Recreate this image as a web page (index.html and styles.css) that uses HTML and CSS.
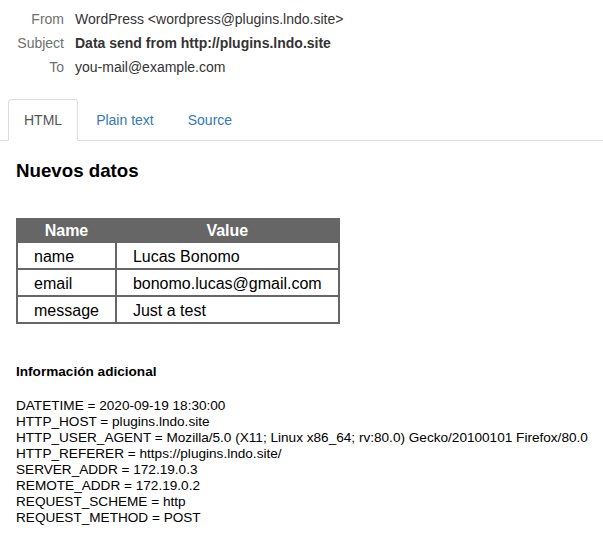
FILE: index.html
```html
<!DOCTYPE html>
<html lang="es">
<head>
<meta charset="utf-8">
<title>Data send from http://plugins.lndo.site</title>
<link rel="stylesheet" href="styles.css">
</head>
<body>
<div class="meta">
  <div class="label">From</div><div class="value">WordPress &lt;wordpress@plugins.lndo.site&gt;</div>
  <div class="label">Subject</div><div class="value subject">Data send from http://plugins.lndo.site</div>
  <div class="label">To</div><div class="value">you-mail@example.com</div>
</div>
<ul class="tabs">
  <li class="tab active"><a>HTML</a></li>
  <li class="tab"><a>Plain text</a></li>
  <li class="tab"><a>Source</a></li>
</ul>
<div class="content">
  <h3 class="title">Nuevos datos</h3>
  <table class="data">
    <thead>
      <tr><th>Name</th><th>Value</th></tr>
    </thead>
    <tbody>
      <tr><td>name</td><td>Lucas Bonomo</td></tr>
      <tr><td>email</td><td>bonomo.lucas@gmail.com</td></tr>
      <tr><td>message</td><td>Just a test</td></tr>
    </tbody>
  </table>
  <div class="info">
    <div class="info-title">Información adicional</div>
    <div class="info-line">DATETIME = 2020-09-19 18:30:00</div>
    <div class="info-line">HTTP_HOST = plugins.lndo.site</div>
    <div class="info-line">HTTP_USER_AGENT = Mozilla/5.0 (X11; Linux x86_64; rv:80.0) Gecko/20100101 Firefox/80.0</div>
    <div class="info-line">HTTP_REFERER = https://plugins.lndo.site/</div>
    <div class="info-line">SERVER_ADDR = 172.19.0.3</div>
    <div class="info-line">REMOTE_ADDR = 172.19.0.2</div>
    <div class="info-line">REQUEST_SCHEME = http</div>
    <div class="info-line">REQUEST_METHOD = POST</div>
  </div>
</div>
</body>
</html>
```
FILE: styles.css
```css
* { box-sizing: border-box; }
html, body {
  margin: 0;
  padding: 0;
  background: #fff;
}
body {
  font-family: "Liberation Sans", Arial, Helvetica, sans-serif;
  color: #000;
}
.meta {
  display: grid;
  grid-template-columns: 64px 1fr;
  column-gap: 11px;
  padding-top: 7px;
  font-size: 14px;
  line-height: 24px;
}
.label {
  text-align: right;
  color: #6f6f6f;
}
.value {
  color: #333;
}
.subject {
  font-weight: bold;
}
.tabs {
  list-style: none;
  margin: 20px 0 0;
  padding: 0 0 0 8px;
  display: flex;
  border-bottom: 1px solid #ddd;
  font-size: 14px;
  line-height: 20px;
}
.tab {
  margin-bottom: -1px;
  margin-right: 2px;
}
.tab a {
  display: block;
  padding: 10px 15px;
  border: 1px solid transparent;
  border-radius: 4px 4px 0 0;
  color: #337ab7;
}
.tab.active a {
  background: #fff;
  color: #555;
  border-color: #ddd #ddd transparent;
}
.content {
  padding: 19px 16px 0;
}
.title {
  margin: 0;
  font-size: 18.72px;
  line-height: 22px;
  font-weight: bold;
}
.data {
  margin-top: 36px;
  border-collapse: separate;
  border-spacing: 0;
  border: 2px solid #666;
  font-size: 16px;
  line-height: 19px;
}
.data th {
  background: #666;
  color: #fff;
  font-weight: bold;
  padding: 1px 16px;
  text-align: center;
  border-bottom: 2px solid #666;
  border-right: 2px solid #666;
}
.data td {
  padding: 4px 16px 2px;
  text-align: left;
  border-right: 2px solid #666;
  border-bottom: 2px solid #666;
}
.data th:last-child,
.data td:last-child {
  border-right: 0;
}
.data tbody tr:last-child td {
  border-bottom: 0;
}
.info {
  margin-top: 40px;
  font-size: 13.6px;
  line-height: 16px;
}
.info-title {
  font-weight: bold;
  margin-bottom: 18px;
}
.info-line {
  white-space: nowrap;
}
```
